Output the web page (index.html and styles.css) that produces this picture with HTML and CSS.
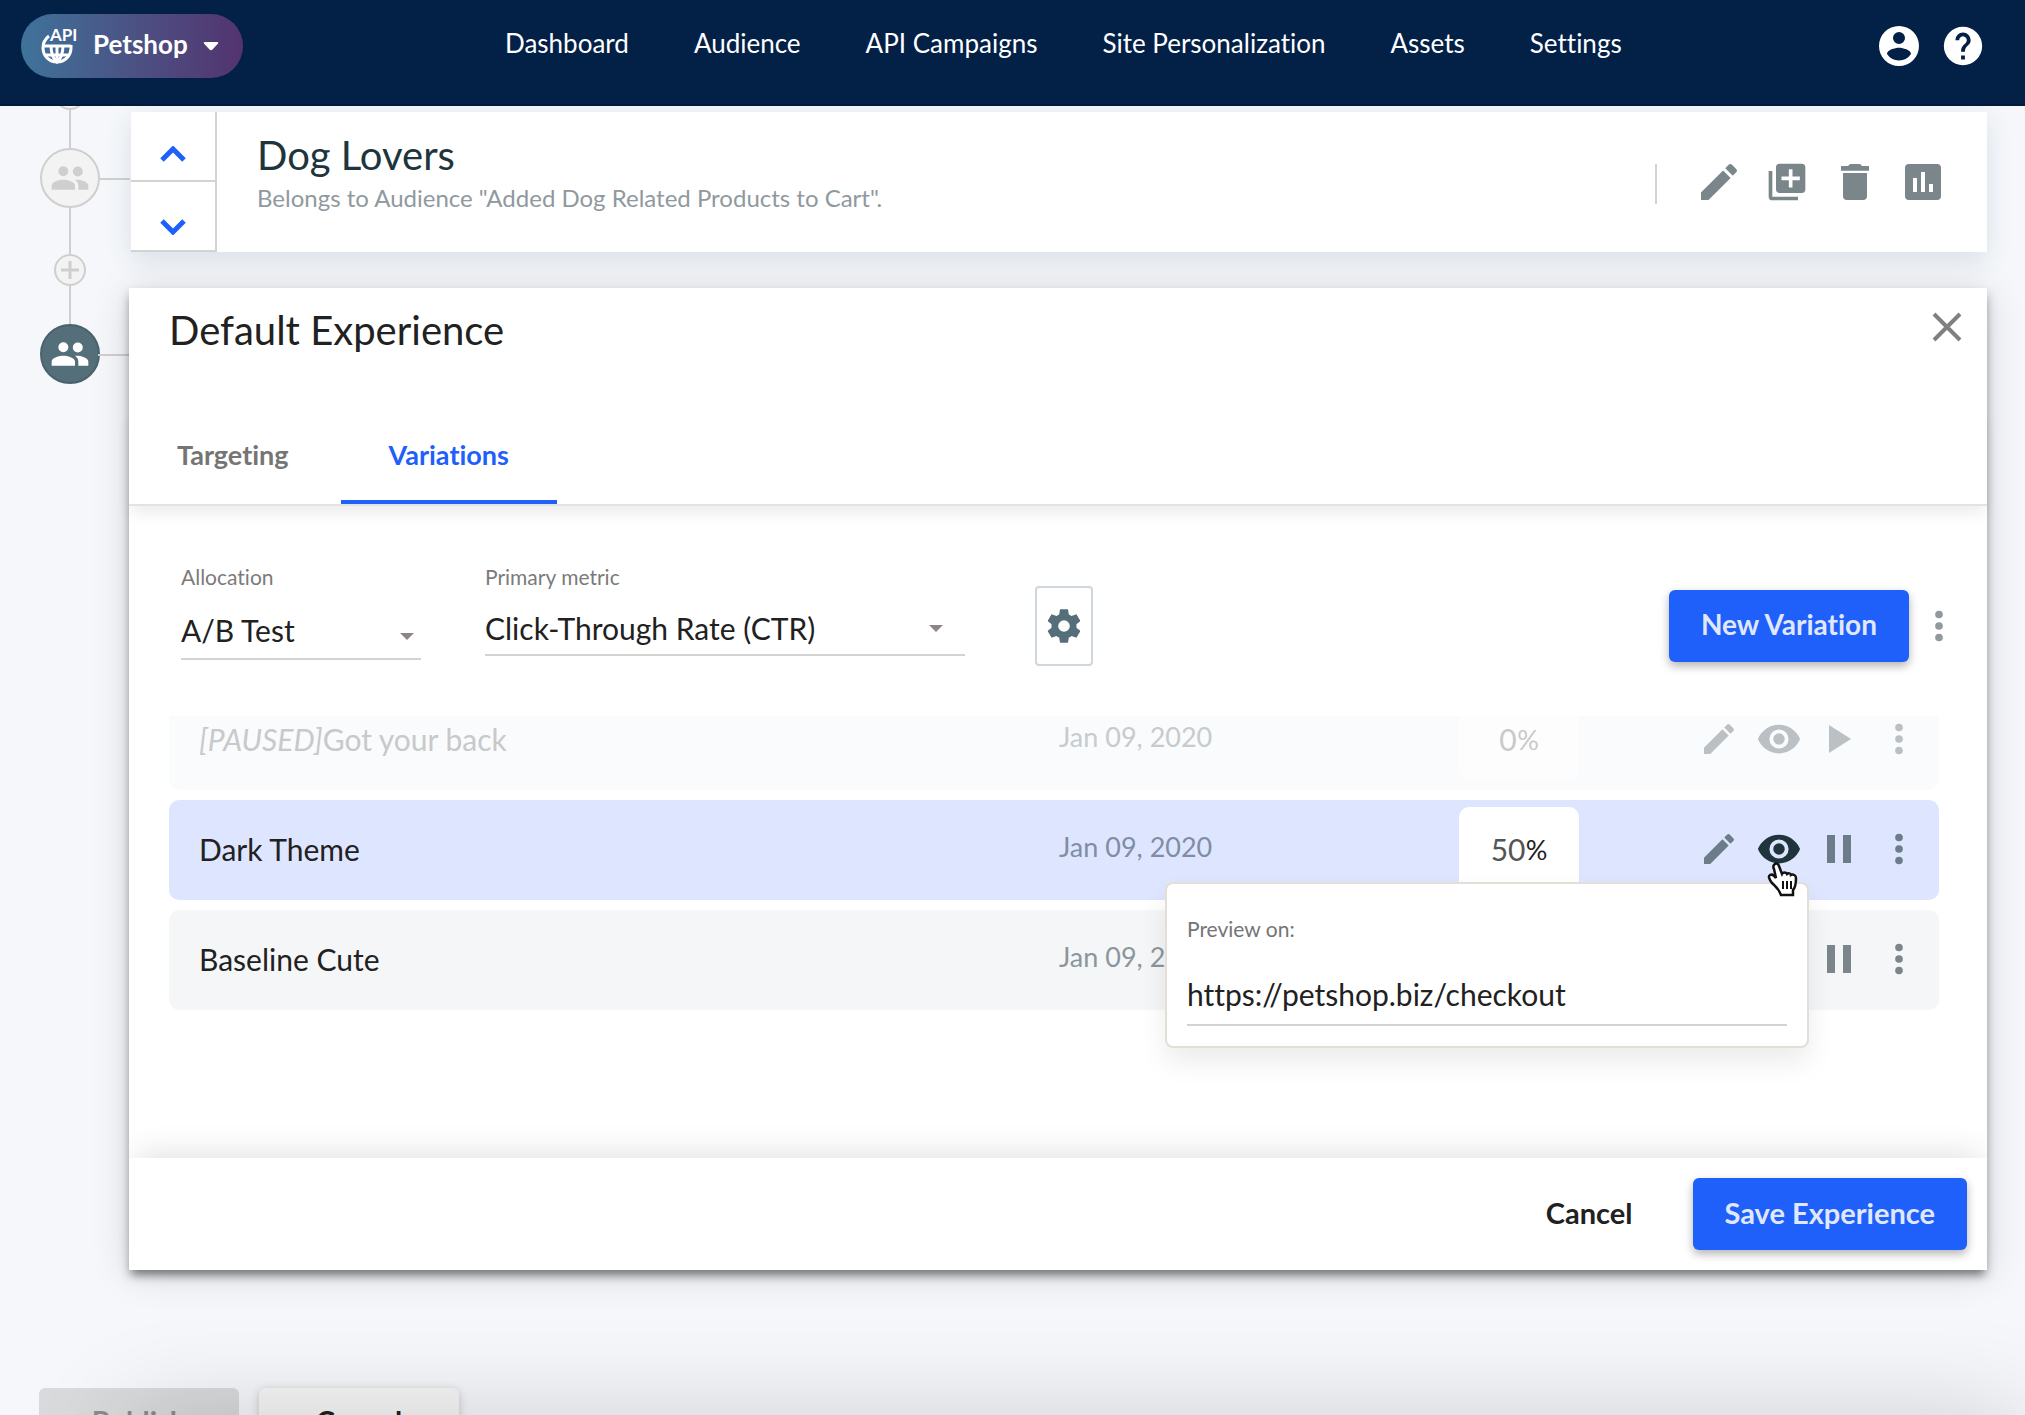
FILE: index.html
```html
<!DOCTYPE html>
<html lang="en">
<head>
  <meta charset="UTF-8" />
  <meta name="viewport" content="width=device-width, initial-scale=1.0" />
  <title>Petshop | Default Experience</title>
  <link rel="stylesheet" href="styles.css">
</head>
<body>
  <svg class="sprite" aria-hidden="true">
    <symbol id="people" viewBox="0 0 24 24"><path d="M16.670 11.130a3 3 0 1 0 0-6 3 3 0 0 0 0 6zM8 11a3 3 0 1 0 0-6 3 3 0 0 0 0 6zm0 2c-2.330 0-7 1.170-7 3.500V19h14v-2.500C15 14.170 10.330 13 8 13zm8 0c-.29 0-.62.020-.97.050 1.160.84 1.970 1.970 1.970 3.450V19h6v-2.500c0-2.330-4.670-3.500-7-3.500z"/></symbol>
    <symbol id="edit" viewBox="0 0 24 24"><path d="M3 17.250V21h3.750L17.810 9.940l-3.750-3.750L3 17.250zM20.710 7.040a1 1 0 0 0 0-1.410l-2.340-2.340a1 1 0 0 0-1.410 0l-1.830 1.830 3.750 3.750 1.830-1.830z"/></symbol>
    <symbol id="eye" viewBox="0 0 24 24"><path d="M12 4.500C7 4.500 2.730 7.610 1 12c1.730 4.390 6 7.500 11 7.500s9.270-3.110 11-7.500c-1.730-4.390-6-7.500-11-7.500zM12 17a5 5 0 1 1 0-10 5 5 0 0 1 0 10zm0-8a3 3 0 1 0 0 6 3 3 0 0 0 0-6z"/></symbol>
    <symbol id="pause" viewBox="0 0 24 24"><path d="M6 5h4v14H6zM14 5h4v14h-4z"/></symbol>
    <symbol id="play" viewBox="0 0 24 24"><path d="M7 5v14l11-7z"/></symbol>
    <symbol id="more" viewBox="0 0 24 24"><circle cx="12" cy="6" r="2"/><circle cx="12" cy="12" r="2"/><circle cx="12" cy="18" r="2"/></symbol>
  </svg>

  <header class="header">
    <button class="account">
      <svg class="globe" viewBox="0 0 38 38">
        <g fill="none" stroke="#fff" stroke-width="3">
          <path d="M8 9C4 12 2 16 2 21a14 14 0 0 0 28 0v-3"/>
          <path d="M3 19h27M5 28h22"/>
          <path d="M10 18c0 8 2 14 6 17 4-3 6-9 6-17M16 18v17"/>
        </g>
        <text x="9" y="14">API</text>
      </svg>
      <span>Petshop</span>
      <svg class="caret" viewBox="0 0 16 10"><path d="M2 1h12q2 0 1 1.500L9.500 8.500q-1.500 1.500-3 0L1 2.500Q0 1 2 1z" fill="#fff"/></svg>
    </button>
    <nav class="nav">
      <a href="#">Dashboard</a>
      <a href="#">Audience</a>
      <a href="#">API Campaigns</a>
      <a href="#">Site Personalization</a>
      <a href="#">Assets</a>
      <a href="#">Settings</a>
    </nav>
    <div class="header-icons">
      <button class="icon-btn" aria-label="Account"><svg class="i48" viewBox="0 0 24 24"><path d="M12 2a10 10 0 1 0 0 20 10 10 0 0 0 0-20zm0 3a3 3 0 1 1 0 6 3 3 0 0 1 0-6zm0 14.200a7.200 7.200 0 0 1-6-3.220c.030-1.990 4-3.080 6-3.080 1.990 0 5.970 1.090 6 3.080a7.200 7.200 0 0 1-6 3.220z"/></svg></button>
      <button class="icon-btn" aria-label="Help"><svg class="i46" viewBox="0 0 24 24"><path d="M12 2a10 10 0 1 0 0 20 10 10 0 0 0 0-20zm1 17h-2v-2h2v2zm2.070-7.750-.9.920C13.450 12.900 13 13.500 13 15h-2v-.5c0-1.100.45-2.100 1.170-2.830l1.240-1.260A2 2 0 1 0 10 9H8a4 4 0 1 1 8 0c0 .88-.36 1.680-.93 2.250z"/></svg></button>
    </div>
  </header>

  <main class="workspace">
    <div class="timeline">
      <span class="add-node first"></span>
      <span class="line"></span>
      <span class="node"><svg viewBox="0 0 24 24"><use href="#people"/></svg></span>
      <span class="line long"></span>
      <button class="add-node" aria-label="Add experience"><svg viewBox="0 0 18 18"><path d="M9 0v18M0 9h18" stroke="#cfcfcf" stroke-width="3"/></svg></button>
      <span class="line"></span>
      <span class="node current"><svg viewBox="0 0 24 24"><use href="#people"/></svg></span>
    </div>

    <div class="content">
      <section class="card">
        <div class="order">
          <button aria-label="Move up"><svg viewBox="0 0 26 16"><path d="M2 14 13 3l11 11"/></svg></button>
          <button aria-label="Move down"><svg viewBox="0 0 26 16"><path d="m2 2 11 11L24 2"/></svg></button>
        </div>
        <div class="card-text">
          <h2>Dog Lovers</h2>
          <p>Belongs to Audience "Added Dog Related Products to Cart".</p>
        </div>
        <div class="card-actions">
          <button class="icon-btn" aria-label="Edit"><svg class="i48" viewBox="0 0 24 24"><use href="#edit"/></svg></button>
          <button class="icon-btn" aria-label="Duplicate"><svg class="i44" viewBox="0 0 24 24"><path d="M4 6H2v14a2 2 0 0 0 2 2h14v-2H4V6zm16-4H8a2 2 0 0 0-2 2v12a2 2 0 0 0 2 2h12a2 2 0 0 0 2-2V4a2 2 0 0 0-2-2zm-1 9h-4v4h-2v-4H9V9h4V5h2v4h4v2z"/></svg></button>
          <button class="icon-btn" aria-label="Delete"><svg class="i52" viewBox="0 0 24 24"><path d="M6 19a2 2 0 0 0 2 2h8a2 2 0 0 0 2-2V7.500H6V19zM19 4h-3.500l-1-1h-5l-1 1H5v2.400h14V4z"/></svg></button>
          <button class="icon-btn" aria-label="Report"><svg class="i48" viewBox="0 0 24 24"><path d="M19 3H5a2 2 0 0 0-2 2v14a2 2 0 0 0 2 2h14a2 2 0 0 0 2-2V5a2 2 0 0 0-2-2zM9 17H7v-7h2v7zm4 0h-2V7h2v10zm4 0h-2v-4h2v4z"/></svg></button>
        </div>
      </section>

      <section class="modal">
        <div class="modal-head">
          <h1>Default Experience</h1>
          <button class="icon-btn close" aria-label="Close"><svg viewBox="0 0 30 30"><path d="m2 2 26 26M28 2 2 28"/></svg></button>
        </div>

        <div class="tabs">
          <button>Targeting</button>
          <button class="active">Variations</button>
        </div>

        <div class="toolbar">
          <div class="field allocation">
            <label for="allocation">Allocation</label>
            <div class="select"><select id="allocation"><option>A/B Test</option></select></div>
          </div>
          <div class="field metric">
            <label for="metric">Primary metric</label>
            <div class="select"><select id="metric"><option>Click-Through Rate (CTR)</option></select></div>
          </div>
          <button class="gear" aria-label="Settings"><svg viewBox="0 0 24 24"><path d="M19.430 12.980c.040-.32.070-.64.070-.98s-.030-.66-.070-.98l2.110-1.650c.19-.15.240-.42.120-.64l-2-3.460c-.12-.22-.39-.3-.61-.22l-2.490 1c-.52-.4-1.080-.73-1.690-.98l-.38-2.650A.49.49 0 0 0 14 2h-4c-.25 0-.46.180-.49.420l-.38 2.650c-.61.250-1.170.590-1.690.980l-2.490-1c-.23-.09-.49 0-.61.220l-2 3.460c-.13.220-.07.490.12.640l2.110 1.650c-.04.320-.07.650-.07.980s.030.660.070.980l-2.110 1.650c-.19.150-.24.420-.12.640l2 3.460c.12.220.39.300.61.220l2.490-1c.52.400 1.080.730 1.690.980l.38 2.650c.030.240.240.420.490.420h4c.25 0 .46-.18.490-.42l.38-2.650c.61-.25 1.170-.59 1.690-.98l2.490 1c.23.090.49 0 .61-.22l2-3.460c.12-.22.070-.49-.12-.64l-2.110-1.650zM12 15.500a3.500 3.500 0 1 1 0-7 3.500 3.500 0 0 1 0 7z"/></svg></button>
          <button class="btn primary new">New Variation</button>
          <button class="icon-btn more" aria-label="More"><svg class="i46" viewBox="0 0 24 24"><use href="#more"/></svg></button>
        </div>

        <div class="variations">
          <ul class="rows">
            <li class="row paused">
              <span class="name"><em>[PAUSED]</em>Got your back</span>
              <span class="date">Jan 09, 2020</span>
              <label class="share"><input type="text" class="one" value="0" aria-label="Share of Got your back">%</label>
              <div class="row-actions">
                <button class="icon-btn" aria-label="Edit"><svg class="i40" viewBox="0 0 24 24"><use href="#edit"/></svg></button>
                <button class="icon-btn" aria-label="Preview"><svg class="i46" viewBox="0 0 24 24"><use href="#eye"/></svg></button>
                <button class="icon-btn" aria-label="Resume"><svg class="i52" viewBox="0 0 24 24"><use href="#play"/></svg></button>
                <button class="icon-btn" aria-label="More"><svg class="i46" viewBox="0 0 24 24"><use href="#more"/></svg></button>
              </div>
            </li>
            <li class="row selected">
              <span class="name">Dark Theme</span>
              <span class="date">Jan 09, 2020</span>
              <label class="share"><input type="text" value="50" aria-label="Share of Dark Theme">%</label>
              <div class="row-actions">
                <button class="icon-btn" aria-label="Edit"><svg class="i40" viewBox="0 0 24 24"><use href="#edit"/></svg></button>
                <button class="icon-btn on" aria-label="Preview"><svg class="i46" viewBox="0 0 24 24"><use href="#eye"/></svg></button>
                <button class="icon-btn" aria-label="Pause"><svg class="i48" viewBox="0 0 24 24"><use href="#pause"/></svg></button>
                <button class="icon-btn" aria-label="More"><svg class="i46" viewBox="0 0 24 24"><use href="#more"/></svg></button>
              </div>
            </li>
            <li class="row">
              <span class="name">Baseline Cute</span>
              <span class="date">Jan 09, 2020</span>
              <label class="share"><input type="text" value="50" aria-label="Share of Baseline Cute">%</label>
              <div class="row-actions">
                <button class="icon-btn" aria-label="Edit"><svg class="i40" viewBox="0 0 24 24"><use href="#edit"/></svg></button>
                <button class="icon-btn" aria-label="Preview"><svg class="i46" viewBox="0 0 24 24"><use href="#eye"/></svg></button>
                <button class="icon-btn" aria-label="Pause"><svg class="i48" viewBox="0 0 24 24"><use href="#pause"/></svg></button>
                <button class="icon-btn" aria-label="More"><svg class="i46" viewBox="0 0 24 24"><use href="#more"/></svg></button>
              </div>
            </li>
          </ul>

          <div class="popup">
            <label for="preview">Preview on:</label>
            <input type="text" id="preview" value="https://petshop.biz/checkout">
            <svg class="cursor" viewBox="0 0 32 36"><path d="M7 3c1-2 4-2 5 1l3 8c1-2 4-2 5 0 1-1 4-1 4 1 2-1 5 0 5 3 0 6-1 10-3 12v5H14c-2-6-5-8-9-12-3-4-4-7-2-8s4 0 6 3L7 7c-1-2-1-3 0-4z" fill="#fff" stroke="#111" stroke-width="2.500"/><path d="M16 19v8M20 19v8M24 19v8" stroke="#111" stroke-width="2"/></svg>
          </div>
        </div>

        <div class="modal-foot">
          <button class="btn flat">Cancel</button>
          <button class="btn primary">Save Experience</button>
        </div>
      </section>
    </div>
  </main>

  <div class="page-actions">
    <button class="btn publish" disabled>Publish</button>
    <button class="btn raised">Cancel</button>
  </div>
  <div class="bottom-shade"></div>
</body>
</html>
```
FILE: styles.css
```css
* {
  box-sizing: border-box;
}
body {
  margin: 0;
  height: 100vh;
  overflow: hidden;
  font-family: Lato, 'Open Sans', sans-serif;
  font-size: 30px;
  font-variant-ligatures: none;
  color: #212121;
  background-color: #f5f7fa;
}
h1, h2, p, ul {
  margin: 0;
  padding: 0;
  font-weight: normal;
}
button, input, select {
  font: inherit;
  font-variant-ligatures: none;
  color: inherit;
  border: none;
  background: none;
  padding: 0;
  outline: none;
}
button {
  cursor: pointer;
}
svg {
  display: block;
  fill: currentColor;
}
.sprite {
  display: none;
}
.i40 { width: 40px; height: 40px; }
.i44 { width: 44px; height: 44px; }
.i46 { width: 46px; height: 46px; }
.i48 { width: 48px; height: 48px; }
.i52 { width: 52px; height: 52px; }
.icon-btn {
  display: flex;
  flex: none;
  align-items: center;
  justify-content: center;
  width: 48px;
  height: 48px;
}

/* header */
.header {
  position: relative;
  z-index: 2;
  display: flex;
  align-items: flex-start;
  height: 106px;
  padding: 14px 38px 0 21px;
  background-color: #032047;
  border-bottom: 2px solid #021a3c;
  color: #fff;
}
.account {
  display: flex;
  align-items: center;
  width: 222px;
  height: 64px;
  padding: 0 24px 0 20px;
  border-radius: 32px;
  background: linear-gradient(90deg, #3f739a, #4c4f82 55%, #533370);
  font-size: 26px;
  font-weight: bold;
}
.account span {
  margin: 0 auto 4px 14px;
}
.globe {
  width: 38px;
  height: 38px;
  overflow: visible;
}
.globe text {
  font-size: 17px;
  font-weight: bold;
}
.caret {
  width: 16px;
  height: 10px;
}
.nav {
  display: flex;
  gap: 65px;
  margin-left: 262px;
  font-size: 26px;
  line-height: 58px;
}
.nav a {
  color: #fff;
  text-decoration: none;
}
.header-icons {
  display: flex;
  gap: 16px;
  margin-left: auto;
  padding-top: 8px;
}

/* timeline on the left */
.workspace {
  display: grid;
  grid-template-columns: 129px 1fr;
  padding-right: 38px;
}
.timeline {
  display: flex;
  flex-direction: column;
  align-items: center;
  padding-left: 11px;
}
.line {
  width: 2px;
  height: 38px;
  background-color: #cfcfcf;
}
.line.long {
  height: 46px;
}
.node {
  position: relative;
  display: flex;
  align-items: center;
  justify-content: center;
  width: 60px;
  height: 60px;
  border: 2px solid #cfcfcf;
  border-radius: 50%;
  background-color: #f3f3f3;
  color: #cfcfcf;
}
.node svg {
  width: 40px;
  height: 40px;
}
.node::after {
  content: "";
  position: absolute;
  left: 100%;
  top: 28px;
  width: 32px;
  height: 2px;
  background-color: #cfcfcf;
}
.node.current {
  border-color: #4a626c;
  background-color: #546e7a;
  color: #fff;
}
.add-node {
  display: flex;
  align-items: center;
  justify-content: center;
  width: 32px;
  height: 32px;
  border: 2px solid #cfcfcf;
  border-radius: 50%;
  background-color: #f3f3f3;
}
.add-node svg {
  width: 18px;
  height: 18px;
}
.add-node.first {
  margin-top: -28px;
}

/* experience card */
.card {
  display: flex;
  height: 140px;
  margin: 6px 0 36px 2px;
  background-color: #fff;
  box-shadow: 0 8px 24px rgba(60, 90, 120, 0.14);
  position: relative;
}
.order {
  display: flex;
  flex-direction: column;
  width: 86px;
  border-right: 2px solid #d3d4cf;
}
.order button {
  display: flex;
  align-items: center;
  justify-content: center;
  height: 70px;
  padding-top: 16px;
  border-bottom: 2px solid #d3d4cf;
}
.order button:last-child {
  padding-top: 22px;
}
.order svg {
  width: 26px;
  height: 16px;
  fill: none;
  stroke: #1f5ffa;
  stroke-width: 5;
}
.card-text {
  padding: 17px 0 0 40px;
}
.card-text h2 {
  font-size: 40px;
  line-height: 52px;
  color: #20343b;
}
.card-text p {
  font-size: 24px;
  line-height: 34px;
  color: #8f999e;
}
.card-actions {
  display: flex;
  align-items: center;
  gap: 20px;
  height: 40px;
  margin: 52px 40px 0 auto;
  padding: 0 0 4px 38px;
  border-left: 2px solid #d3d4cf;
  color: #7a868a;
}

/* modal */
.modal {
  position: relative;
  background-color: #fff;
  box-shadow: 0 6px 10px rgba(0, 0, 0, 0.26), 0 4px 36px rgba(0, 0, 0, 0.14), 0 8px 8px -4px rgba(0, 0, 0, 0.3);
}
.modal-head {
  display: flex;
  align-items: flex-start;
  justify-content: space-between;
  height: 120px;
  padding: 15px 16px 0 40px;
}
.modal-head h1 {
  font-size: 40px;
  line-height: 54px;
}
.close svg {
  width: 30px;
  height: 30px;
  stroke: #808080;
  stroke-width: 4;
}
.tabs {
  display: flex;
  gap: 4px;
  height: 98px;
  border-bottom: 2px solid #e3e3e3;
  box-shadow: 0 10px 14px -2px rgba(0, 0, 0, 0.07);
  font-weight: bold;
  color: #757575;
}
.tabs button {
  padding: 0 48px;
  border-bottom: 4px solid transparent;
  font-size: 27px;
}
.tabs .active {
  border-color: #1f5ffa;
  color: #1f5ffa;
}
.toolbar {
  display: flex;
  align-items: center;
  height: 210px;
  padding: 60px 24px 30px 52px;
}
.field {
  align-self: flex-start;
  color: #7b7b7b;
}
.field label {
  display: block;
  font-size: 21px;
  line-height: 22px;
}
.allocation {
  width: 240px;
  margin-right: 64px;
}
.metric {
  width: 480px;
  margin-right: 70px;
}
.select {
  position: relative;
  height: 72px;
  border-bottom: 2px solid #d3d4cf;
}
.metric .select {
  height: 68px;
}
.select select {
  appearance: none;
  width: 100%;
  height: 100%;
  padding-top: 13px;
  color: #212121;
}
.select::after {
  content: "";
  position: absolute;
  right: 7px;
  bottom: 18px;
  border: 7px solid transparent;
  border-top-color: #8d8684;
  border-bottom: none;
}
.metric .select::after {
  right: 22px;
  bottom: 22px;
}
.gear {
  width: 58px;
  height: 80px;
  padding: 7px;
  border: 2px solid #cfd6dc;
  border-radius: 4px;
  color: #546e7a;
}
.gear svg {
  width: 40px;
  height: 40px;
}
.btn {
  height: 72px;
  padding: 0 32px 4px;
  border-radius: 6px;
  font-size: 29px;
  font-weight: bold;
  white-space: nowrap;
}
.btn.primary {
  background-color: #1f5ffa;
  color: #e0e8fe;
  box-shadow: 0 4px 10px rgba(0, 0, 0, 0.3);
}
.btn.new {
  margin-left: auto;
  font-size: 28px;
}
.more {
  margin-left: 6px;
  color: #8f999e;
}

/* variations list */
.variations {
  position: relative;
  height: 442px;
  padding: 0 48px 0 40px;
}
.rows {
  display: flex;
  flex-direction: column;
  justify-content: flex-end;
  gap: 10px;
  height: 294px;
  overflow: hidden;
  list-style: none;
}
.row {
  display: grid;
  grid-template-columns: 860px 400px 120px 1fr;
  flex: none;
  align-items: center;
  height: 100px;
  padding: 0 10px 2px 30px;
  border-radius: 10px;
  background-color: #f5f6f8;
}
.date {
  padding-bottom: 5px;
  font-size: 27px;
  color: #8b969c;
}
.share {
  display: flex;
  align-items: center;
  justify-content: center;
  height: 84px;
  border-radius: 10px;
  background-color: #fff;
  font-size: 27px;
}
.share input {
  width: 35px;
  font-size: 30px;
  color: #555;
}
.share .one {
  width: 18px;
}
.row-actions {
  display: flex;
  justify-content: flex-end;
  gap: 12px;
  padding-right: 6px;
  color: #7a868a;
}
.row.selected {
  background-color: #dee6ff;
}
.selected .date {
  color: #808da4;
}
.selected .row-actions {
  color: #6c7c88;
}
.selected .row-actions .on {
  color: #20343b;
}
.row.paused {
  background-color: #fafbfd;
}
.paused .name, .paused .share, .paused .share input {
  color: #c8c9ca;
}
.paused .date {
  color: #c6cbcd;
}
.paused .share {
  background-color: #fdfdfd;
}
.paused .row-actions {
  color: #bac0c4;
}
.popup {
  position: absolute;
  top: 166px;
  right: 178px;
  width: 644px;
  padding: 34px 20px 20px;
  border: 2px solid #e3dfd6;
  border-radius: 8px;
  background-color: #fff;
  box-shadow: 0 14px 28px rgba(0, 0, 0, 0.08);
}
.popup label {
  display: block;
  font-size: 21px;
  line-height: 22px;
  color: #757575;
}
.popup input {
  display: block;
  width: 100%;
  height: 60px;
  margin-top: 26px;
  padding-bottom: 2px;
  border-bottom: 2px solid #d3d4cf;
}
.cursor {
  position: absolute;
  top: -22px;
  right: 8px;
  width: 32px;
  height: 36px;
}
.modal-foot {
  position: relative;
  display: flex;
  align-items: center;
  justify-content: flex-end;
  gap: 28px;
  height: 112px;
  padding: 0 20px;
  background-color: #fff;
  box-shadow: 0 -10px 30px -6px rgba(0, 0, 0, 0.12);
  clip-path: inset(-60px 0 0);
}

/* buttons under the modal */
.page-actions {
  display: flex;
  gap: 20px;
  padding: 118px 39px 0;
}
.page-actions .btn {
  width: 200px;
  padding-bottom: 8px;
}
.publish {
  background-color: #d9dadb;
  color: #8b8b8b;
}
.raised {
  background-color: #f6f6f6;
  box-shadow: 0 2px 10px rgba(0, 0, 0, 0.2);
}
.bottom-shade {
  position: fixed;
  top: 100%;
  left: 129px;
  right: 0;
  height: 100px;
  box-shadow: 0 0 100px rgba(0, 0, 0, 0.17);
}
```
